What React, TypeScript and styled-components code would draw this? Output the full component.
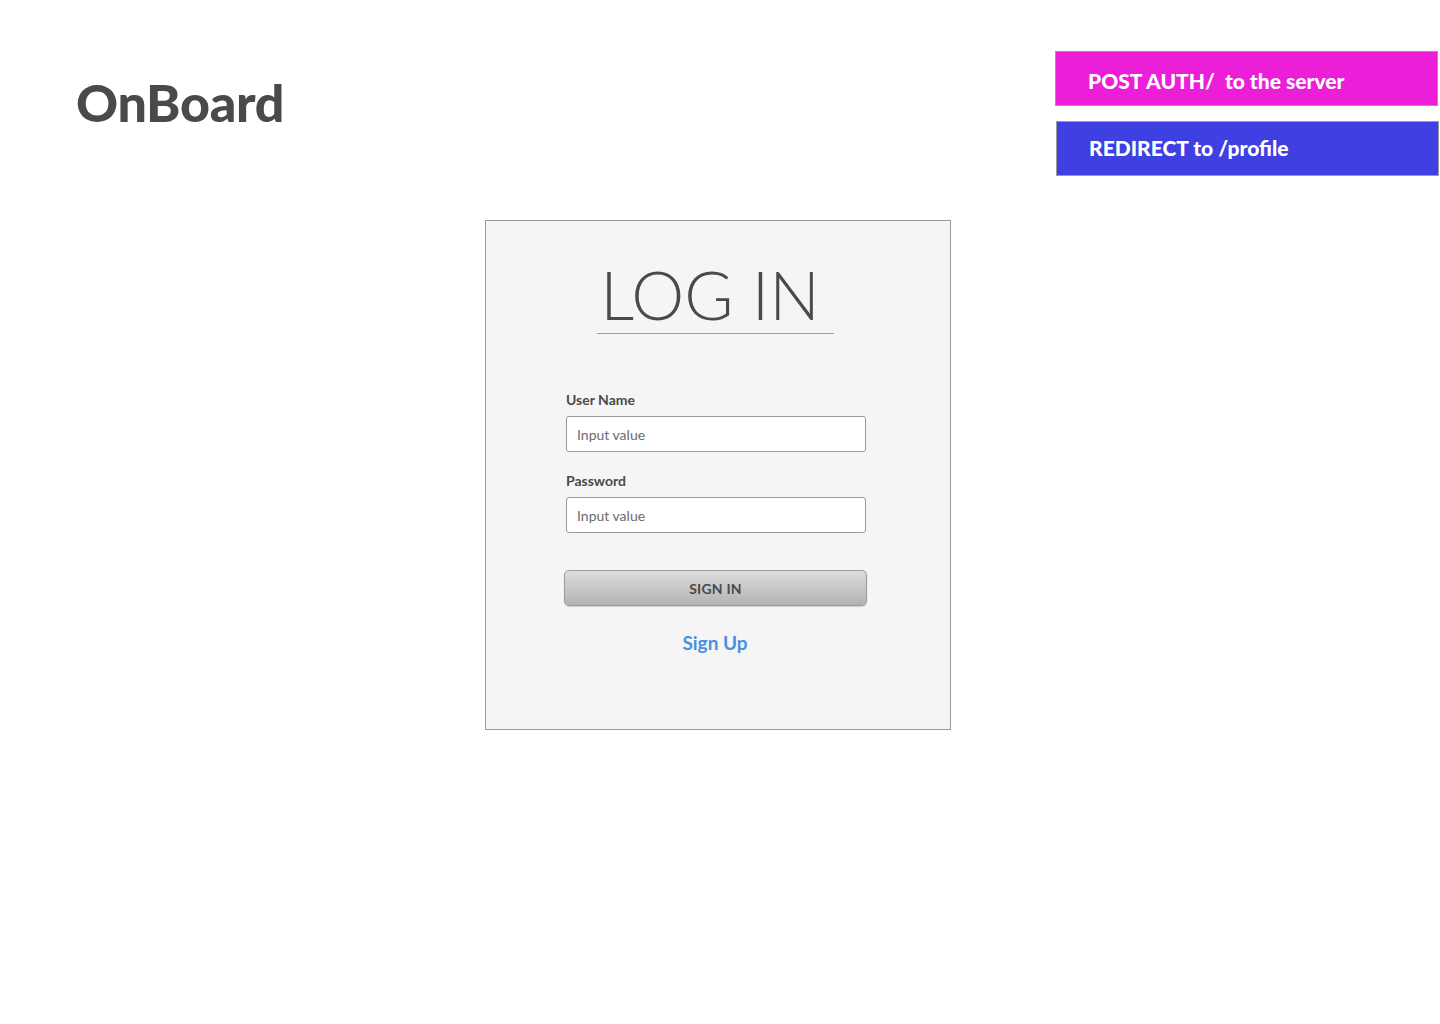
import React from "react";
import styled, { createGlobalStyle } from "styled-components";

const Global = createGlobalStyle`
  html, body { margin: 0; padding: 0; background: #fff; }
  body { font-family: Lato, "Open Sans", "Liberation Sans", sans-serif; color: #4a4a4a; }
  * { box-sizing: border-box; }
`;

const Page = styled.div`
  width: 1440px;
  height: 1024px;
  display: flex;
  flex-direction: column;
`;

const Header = styled.header`
  display: flex;
  justify-content: space-between;
  align-items: flex-start;
  padding: 51px 1px 0 76px;
`;

const Title = styled.h1`
  margin: 24px 0 0 0;
  font-size: 52px;
  line-height: 54px;
  font-weight: 900;
  color: #4a4a4a;
  letter-spacing: -0.3px;
`;

const Notes = styled.div`
  display: flex;
  flex-direction: column;
  align-items: flex-start;
  gap: 15px;
`;

const Note = styled.div<{ $bg: string; $shift: number; $lift: number }>`
  width: 383px;
  height: 55px;
  margin-left: ${(p) => p.$shift}px;
  background: ${(p) => p.$bg};
  border: 1px solid #9b9b9b;
  display: flex;
  align-items: center;
  padding-left: 32px;
  padding-top: ${(p) => (p.$lift < 0 ? -p.$lift : 0)}px;
  padding-bottom: ${(p) => (p.$lift > 0 ? p.$lift : 0)}px;
  color: #fff;
  font-size: 21px;
  font-weight: 900;
  white-space: pre;
`;

const Main = styled.main`
  display: flex;
  padding-left: 485px;
  margin-top: 44px;
`;

const Card = styled.section`
  width: 466px;
  height: 510px;
  background: #f5f5f5;
  border: 1px solid #9b9b9b;
  display: flex;
  flex-direction: column;
  align-items: center;
`;

const Heading = styled.div`
  margin-top: 35px;
  margin-left: -6px;
  width: 237px;
  border-bottom: 1px solid #9b9b9b;
  text-align: center;
  padding-bottom: 1px;
`;

const HeadingText = styled.h2`
  margin: 0 0 0 -10px;
  font-size: 67px;
  line-height: 76px;
  font-weight: 300;
  color: #4a4a4a;
`;

const Form = styled.form`
  margin-top: 57px;
  margin-left: -4px;
  width: 300px;
  display: flex;
  flex-direction: column;
`;

const Field = styled.div`
  display: flex;
  flex-direction: column;
  margin-bottom: 20px;
  &:last-of-type { margin-bottom: 0; }
`;

const Label = styled.label`
  font-size: 14px;
  font-weight: 700;
  color: #4a4a4a;
  line-height: 17px;
  margin-bottom: 8px;
`;

const Input = styled.input`
  width: 300px;
  height: 36px;
  border: 1px solid #9b9b9b;
  border-radius: 3px;
  background: #fff;
  padding: 0 10px;
  font-family: inherit;
  font-size: 14px;
  color: #4a4a4a;
  outline: none;
  &::placeholder { color: #6b6b6b; }
`;

const Button = styled.button`
  margin-top: 37px;
  margin-left: -2px;
  width: 303px;
  height: 36px;
  border: 1px solid #9b9b9b;
  border-radius: 5px;
  background: linear-gradient(#dcdcdc, #b3b3b3);
  box-shadow: 0 1px 1px rgba(0, 0, 0, 0.15);
  font-family: inherit;
  font-size: 14px;
  font-weight: 700;
  color: #4a4a4a;
  letter-spacing: 0.2px;
`;

const SignUp = styled.a`
  margin-top: 25px;
  align-self: center;
  margin-left: -2px;
  color: #4a90e2;
  font-size: 19px;
  font-weight: 700;
  text-decoration: none;
`;

export default function App() {
  return (
    <>
      <Global />
      <Page>
        <Header>
          <Title>OnBoard</Title>
          <Notes>
            <Note $bg="#ec1ed7" $shift={0} $lift={-4}>{"POST AUTH/  to the server"}</Note>
            <Note $bg="#3e40e1" $shift={1} $lift={3}>REDIRECT to /profile</Note>
          </Notes>
        </Header>
        <Main>
          <Card>
            <Heading>
              <HeadingText>LOG IN</HeadingText>
            </Heading>
            <Form onSubmit={(e) => e.preventDefault()}>
              <Field>
                <Label>User Name</Label>
                <Input placeholder="Input value" />
              </Field>
              <Field>
                <Label>Password</Label>
                <Input type="password" placeholder="Input value" />
              </Field>
              <Button type="submit">SIGN IN</Button>
              <SignUp href="#">Sign Up</SignUp>
            </Form>
          </Card>
        </Main>
      </Page>
    </>
  );
}
